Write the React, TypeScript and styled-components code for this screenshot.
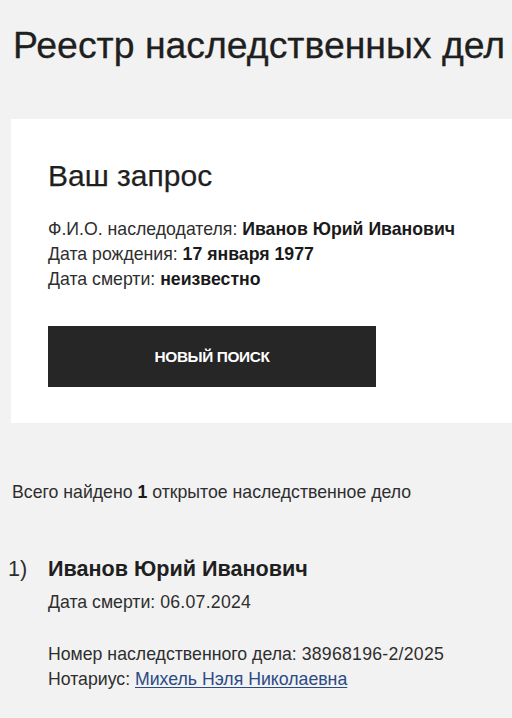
import React from "react";
import styled, { createGlobalStyle } from "styled-components";

const GlobalStyle = createGlobalStyle`
  html, body {
    margin: 0;
    padding: 0;
    background: #f2f2f2;
    overflow-x: hidden;
  }
  body {
    font-family: "Liberation Sans", Arial, sans-serif;
    color: #262626;
  }
`;

const Page = styled.div`
  width: 560px;
  padding: 25px 0 40px 0;
`;

const PageTitle = styled.h1`
  margin: 0 0 53px 13px;
  font-size: 37.4px;
  font-weight: 400;
  line-height: 41px;
  color: #1f1f1f;
  white-space: nowrap;
  -webkit-text-stroke: 0.3px #1f1f1f;
`;

const RequestCard = styled.section`
  margin-left: 11px;
  background: #fff;
  padding: 41px 37px 36px 37px;
`;

const CardTitle = styled.h2`
  margin: 0 0 25px 0;
  font-size: 30px;
  font-weight: 400;
  line-height: 32px;
  color: #1f1f1f;
  -webkit-text-stroke: 0.25px #1f1f1f;
`;

const InfoLine = styled.div`
  font-size: 17.7px;
  line-height: 25px;
  color: #2e2e2e;

  b {
    color: #1a1a1a;
    font-weight: 700;
  }
`;

const SearchButton = styled.button`
  display: block;
  margin-top: 34px;
  width: 328px;
  height: 61px;
  border: 0;
  background: #262626;
  color: #fff;
  font-family: "Liberation Sans", Arial, sans-serif;
  font-size: 15.4px;
  font-weight: 700;
  letter-spacing: -0.4px;
  text-transform: uppercase;
  cursor: pointer;
`;

const Summary = styled.p`
  margin: 57px 0 50px 12px;
  font-size: 17.7px;
  line-height: 25px;
  color: #2e2e2e;

  b {
    color: #1a1a1a;
  }
`;

const CaseList = styled.ol`
  list-style: none;
  margin: 0;
  padding: 0 0 0 8px;
`;

const CaseItem = styled.li`
  display: grid;
  grid-template-columns: 40px 1fr;
`;

const Marker = styled.span`
  font-size: 21.6px;
  line-height: 28px;
  color: #2e2e2e;
`;

const CaseName = styled.div`
  font-size: 21.6px;
  font-weight: 700;
  line-height: 28px;
  color: #1f1f1f;
  margin-bottom: 7px;
`;

const CaseLine = styled.div<{ $gap?: number }>`
  font-size: 17.7px;
  line-height: 25px;
  color: #2e2e2e;
  margin-top: ${(p) => p.$gap ?? 0}px;
`;

const CaseNumber = styled.span`
  letter-spacing: 0.25px;
`;

const NotaryLink = styled.a`
  color: #2b4a86;
  text-decoration: underline;
  text-underline-offset: 2px;
`;

const App: React.FC = () => {
  return (
    <>
      <GlobalStyle />
      <Page>
        <PageTitle>Реестр наследственных дел</PageTitle>

        <RequestCard>
          <CardTitle>Ваш запрос</CardTitle>
          <InfoLine>
            Ф.И.О. наследодателя: <b>Иванов Юрий Иванович</b>
          </InfoLine>
          <InfoLine>
            Дата рождения: <b>17 января 1977</b>
          </InfoLine>
          <InfoLine>
            Дата смерти: <b>неизвестно</b>
          </InfoLine>
          <SearchButton>Новый поиск</SearchButton>
        </RequestCard>

        <Summary>
          Всего найдено <b>1</b> открытое наследственное дело
        </Summary>

        <CaseList>
          <CaseItem>
            <Marker>1)</Marker>
            <div>
              <CaseName>Иванов Юрий Иванович</CaseName>
              <CaseLine>
                Дата смерти: <CaseNumber>06.07.2024</CaseNumber>
              </CaseLine>
              <CaseLine $gap={27}>
                Номер наследственного дела: <CaseNumber>38968196-2/2025</CaseNumber>
              </CaseLine>
              <CaseLine>
                Нотариус: <NotaryLink href="#">Михель Нэля Николаевна</NotaryLink>
              </CaseLine>
            </div>
          </CaseItem>
        </CaseList>
      </Page>
    </>
  );
};

export default App;
